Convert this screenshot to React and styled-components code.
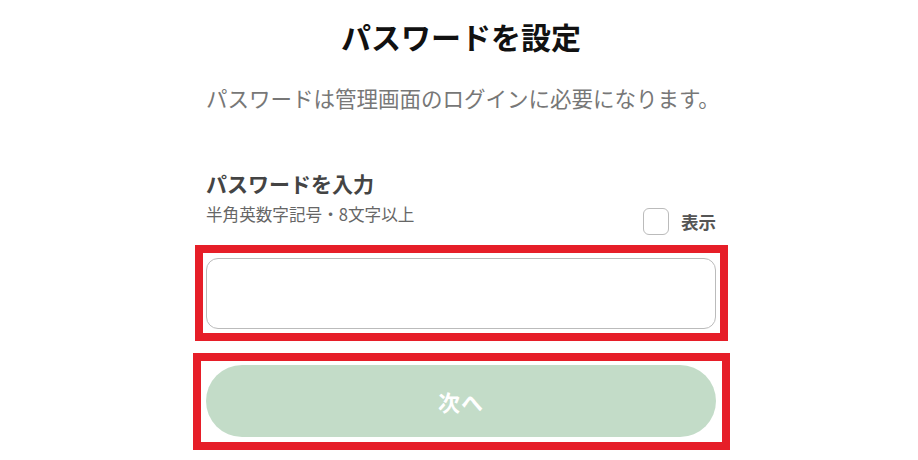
import styled, { createGlobalStyle } from 'styled-components';
import { useState } from 'react';

const GlobalStyle = createGlobalStyle`
  body {
    margin: 0;
    background: #ffffff;
    font-family: "Noto Sans CJK JP", "Noto Sans", sans-serif;
  }
`;

const Page = styled.div`
  width: 918px;
  height: 460px;
  box-sizing: border-box;
  padding-left: 4px;
  overflow: hidden;
`;

const Column = styled.div`
  width: 510px;
  margin: 0 auto;
  display: flex;
  flex-direction: column;
`;

const Title = styled.h1`
  margin: 16px 0 0;
  font-size: 30px;
  line-height: 40px;
  font-weight: 700;
  color: #111;
  text-align: center;
`;

const Lead = styled.p`
  margin: 27px 0 0;
  font-size: 21.5px;
  line-height: 30px;
  color: #777;
  text-align: center;
  white-space: nowrap;
`;

const FieldLabel = styled.h2`
  margin: 56px 0 0;
  font-size: 21px;
  line-height: 28px;
  font-weight: 700;
  color: #444;
`;

const HintRow = styled.div`
  display: flex;
  justify-content: space-between;
  align-items: flex-end;
  margin-top: 5px;
`;

const Hint = styled.span`
  font-size: 16.6px;
  line-height: 24px;
  color: #666;
  margin-bottom: 9px;
`;

const ShowToggle = styled.label`
  display: flex;
  align-items: center;
  gap: 12px;
  font-size: 17.5px;
  font-weight: 700;
  color: #555;
  cursor: pointer;
`;

const Box = styled.span`
  width: 24px;
  height: 25px;
  border: 1px solid #bbb;
  border-radius: 6px;
  background: #fff;
`;

const Frame = styled.div`
  border: 8px solid #e61e28;
  margin: ${p => p.$margin};
  padding: ${p => p.$pad};
`;

const Input = styled.input`
  display: block;
  box-sizing: border-box;
  width: 510px;
  height: 71px;
  border: 1px solid #bbb;
  border-radius: 12px;
  padding: 0 16px;
  font-size: 18px;
  outline: none;
`;

const NextButton = styled.button`
  display: block;
  width: 510px;
  height: 72px;
  border: none;
  border-radius: 36px;
  background: #c3dcc8;
  color: #fff;
  font-family: inherit;
  font-size: 22px;
  font-weight: 700;
  letter-spacing: 1px;
  cursor: pointer;
`;

export default function App() {
  const [show, setShow] = useState(false);
  const [password, setPassword] = useState('');

  return (
    <Page>
      <GlobalStyle />
      <Column>
        <Title>パスワードを設定</Title>
        <Lead>パスワードは管理画面のログインに必要になります。</Lead>
        <FieldLabel>パスワードを入力</FieldLabel>
        <HintRow>
          <Hint>半角英数字記号・8文字以上</Hint>
          <ShowToggle onClick={() => setShow(!show)}>
            <Box />
            表示
          </ShowToggle>
        </HintRow>
        <Frame $margin="10px -12px 0 -11px" $pad="5px 4px 4px 3px">
          <Input
            type={show ? 'text' : 'password'}
            value={password}
            onChange={e => setPassword(e.target.value)}
          />
        </Frame>
        <Frame $margin="12px -14px 0 -13px" $pad="4px 6px 5px 5px">
          <NextButton type="button" disabled={password.length < 8}>次へ</NextButton>
        </Frame>
      </Column>
    </Page>
  );
}
